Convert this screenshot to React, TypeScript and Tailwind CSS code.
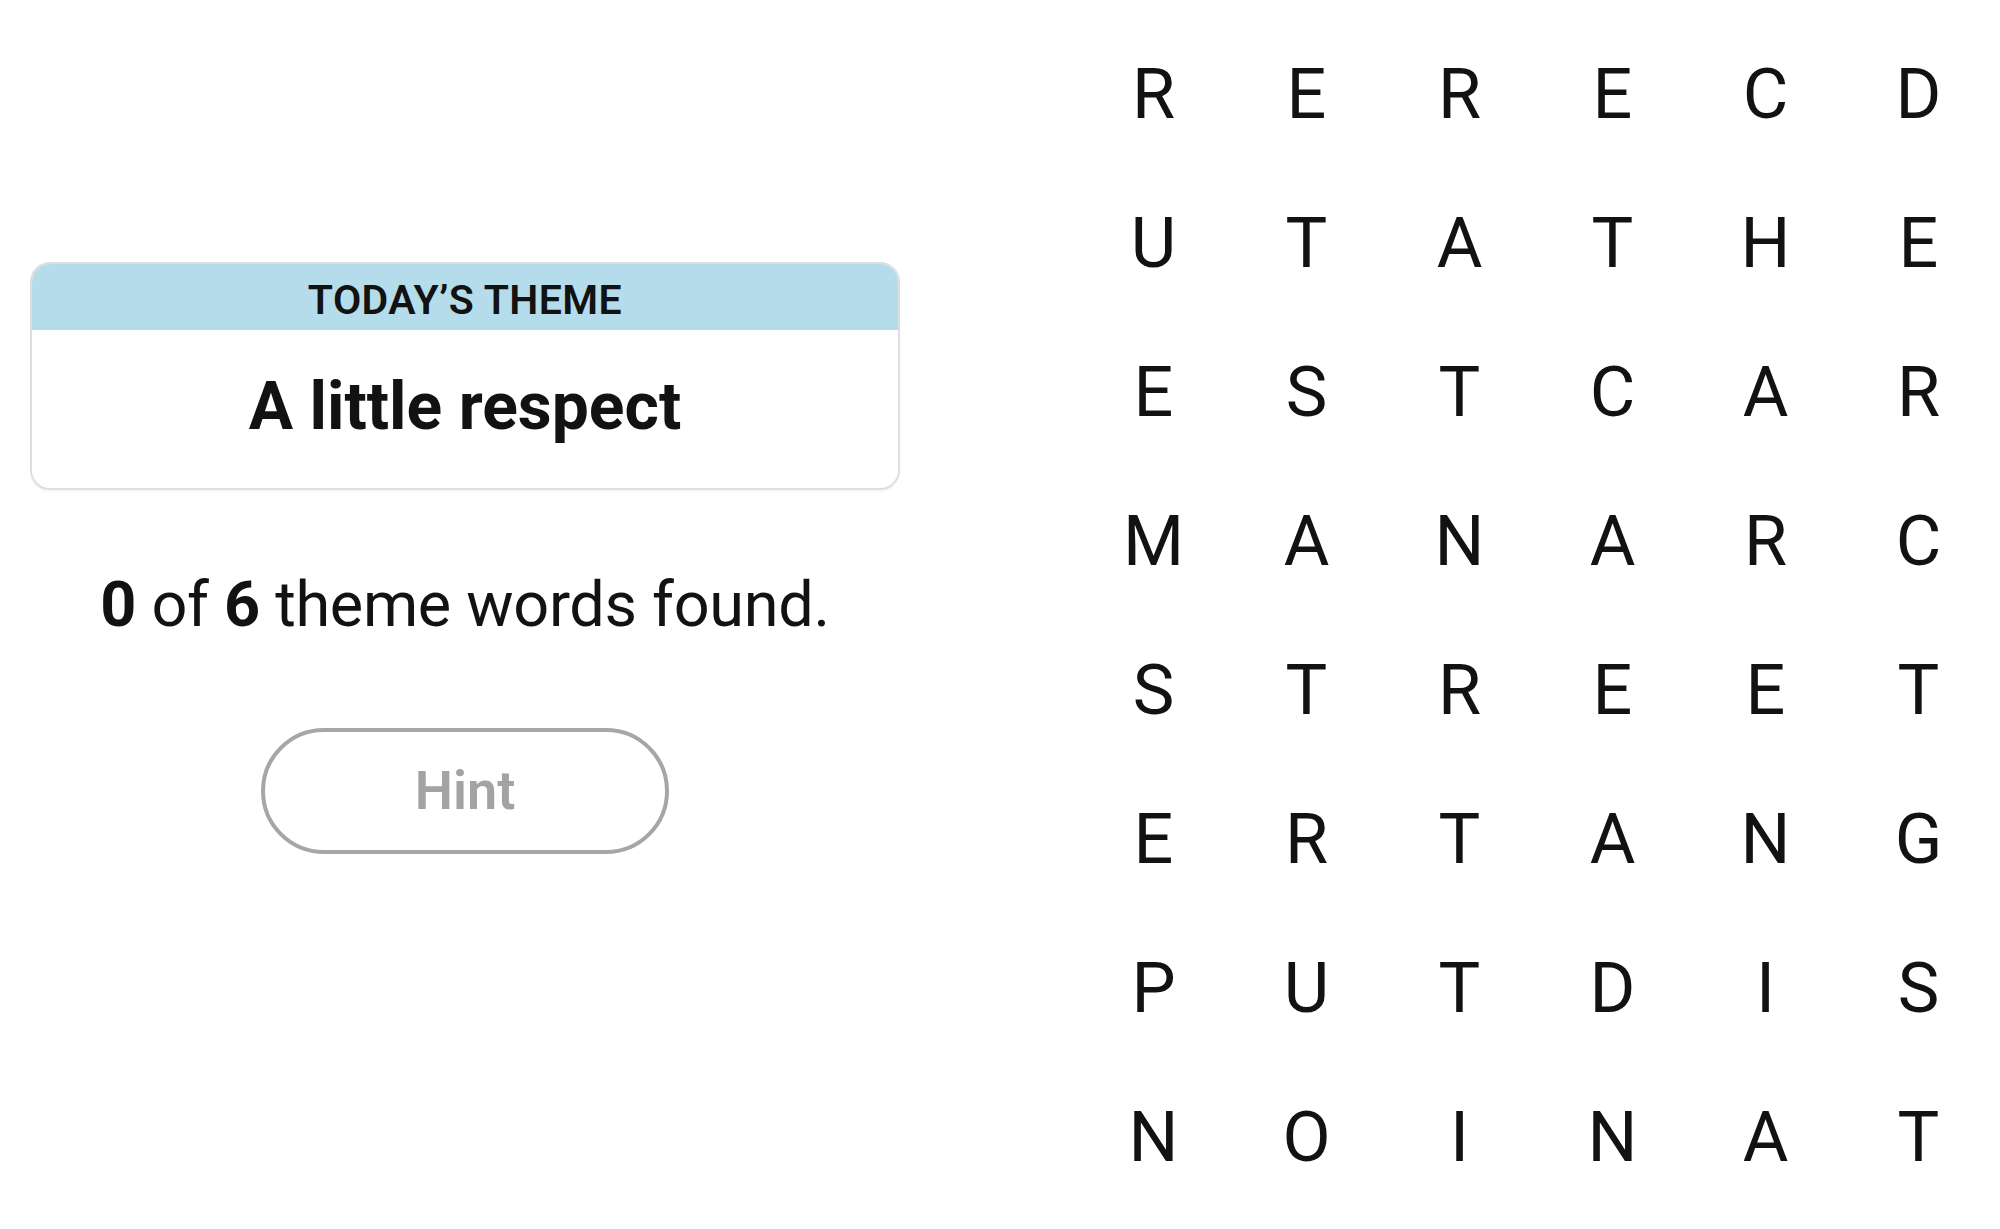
const grid = [
  'RERECD',
  'UTATHE',
  'ESTCAR',
  'MANARC',
  'STREET',
  'ERTANG',
  'PUTDIS',
  'NOINAT',
];

export default function App() {
  return (
    <main className="flex w-[2000px] h-[1229px] bg-white text-[#121212] font-['Roboto',sans-serif] overflow-hidden">
      {/* Left: theme card, progress, hint */}
      <section className="w-[930px] shrink-0 px-[30px] pt-[262px] flex flex-col items-center">
        <div className="w-full rounded-[20px] border-2 border-[#dedede] overflow-hidden shadow-[0_2px_2px_rgba(0,0,0,0.04)]">
          <div className="h-[66px] bg-[#b5dceb] flex items-center justify-center pt-[6px]">
            <span className="text-[41px] font-semibold tracking-[0.01em] leading-none">TODAY’S THEME</span>
          </div>
          <div className="h-[158px] flex items-center justify-center pb-[4px]">
            <h1 className="text-[66px] font-bold leading-none">A little respect</h1>
          </div>
        </div>

        <p className="mt-[83px] text-[63px] leading-none tracking-[-0.005em]">
          <b className="font-bold">0</b> of <b className="font-bold">6</b> theme words found.
        </p>

        <button className="mt-[92px] w-[408px] h-[126px] rounded-full border-4 border-[#a6a6a6] text-[#a3a3a3] text-[54px] font-semibold leading-none">
          Hint
        </button>
      </section>

      {/* Right: letter board */}
      <section className="ml-[147px] pt-[19px]">
        <div className="grid grid-cols-[repeat(6,153px)] grid-rows-[repeat(8,149px)]">
          {grid.map((row, r) =>
            row.split('').map((ch, c) => (
              <div key={`${r}-${c}`} className="flex items-center justify-center text-[70px] leading-none">
                {ch}
              </div>
            ))
          )}
        </div>
      </section>
    </main>
  );
}
